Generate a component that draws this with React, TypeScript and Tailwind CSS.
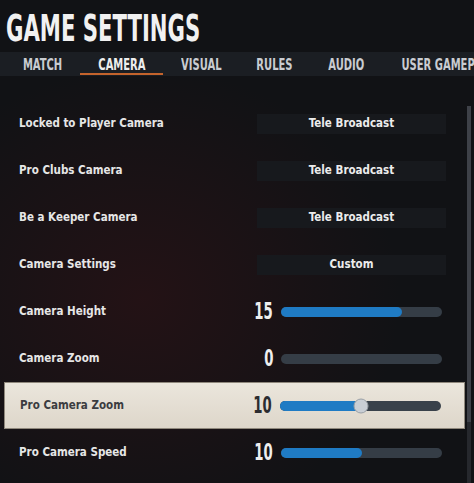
import React from 'react';

type Row =
  | { label: string; kind: 'select'; value: string }
  | { label: string; kind: 'slider'; value: number; active?: boolean; thumb?: boolean };

const tabs = [
  { name: 'MATCH', w: 'w-[74px]' },
  { name: 'CAMERA', w: 'w-[83px]' },
  { name: 'VISUAL', w: 'w-[76px]' },
  { name: 'RULES', w: 'w-[70px]' },
  { name: 'AUDIO', w: 'w-[74px]' },
  { name: 'USER GAMEPLAY', w: 'w-[130px]' },
];

const rows: Row[] = [
  { label: 'Locked to Player Camera', kind: 'select', value: 'Tele Broadcast' },
  { label: 'Pro Clubs Camera', kind: 'select', value: 'Tele Broadcast' },
  { label: 'Be a Keeper Camera', kind: 'select', value: 'Tele Broadcast' },
  { label: 'Camera Settings', kind: 'select', value: 'Custom' },
  { label: 'Camera Height', kind: 'slider', value: 15 },
  { label: 'Camera Zoom', kind: 'slider', value: 0 },
  { label: 'Pro Camera Zoom', kind: 'slider', value: 10, active: true, thumb: true },
  { label: 'Pro Camera Speed', kind: 'slider', value: 10 },
];

const Slider: React.FC<{ value: number; active?: boolean; thumb?: boolean }> = ({ value, active, thumb }) => {
  const pct = (value / 20) * 100;
  return (
    <div className={`relative shrink-0 w-[161px] h-[10px] rounded-full ${active ? 'bg-[#39414a]' : 'bg-[#353d46]'}`}>
      <div className="absolute left-0 top-0 h-full rounded-full bg-[#1f7bc4]" style={{ width: `${pct}%` }} />
      {thumb && (
        <div
          className="absolute top-1/2 w-[15px] h-[15px] -translate-x-1/2 -translate-y-1/2 rounded-full bg-[#c9ced4] border border-[#9aa0a6]"
          style={{ left: `${pct}%` }}
        />
      )}
    </div>
  );
};

const App: React.FC = () => {
  return (
    <div className="relative w-[474px] h-[483px] overflow-hidden bg-[#111215] bg-[radial-gradient(ellipse_at_30%_62%,rgba(70,18,22,0.35),transparent_55%)] font-['DejaVu_Sans_Condensed','DejaVu_Sans',sans-serif]">
      <div className="h-[52px] pl-[6px] pt-[7px]">
        <h1 className="inline-block origin-left scale-x-[0.62] text-[38px] leading-[42px] font-bold text-[#f1f1f1] whitespace-nowrap">
          GAME SETTINGS
        </h1>
      </div>

      <div className="flex h-[24px] pl-[6px] pt-[2px] bg-[#1b1e23] whitespace-nowrap">
        {tabs.map((tab) => (
          <div
            key={tab.name}
            className={`relative shrink-0 flex items-center justify-center ${tab.w} text-[15px] font-bold ${tab.name === 'CAMERA' ? 'text-[#eeeeee]' : 'text-[#c9ccd1]'}`}
          >
            <span className="inline-block scale-x-[0.74]">{tab.name}</span>
            {tab.name === 'CAMERA' && <div className="absolute left-0 right-0 bottom-[1px] h-[2px] bg-[#c4632c]" />}
          </div>
        ))}
      </div>

      <div className="pt-[24px]">
        {rows.map((row) => {
          const active = row.kind === 'slider' && row.active;
          return (
            <div
              key={row.label}
              className={`flex items-center h-[47px] mx-[4px] w-[461px] ${active ? 'bg-[linear-gradient(180deg,#ebe6dc,#ddd6ca)] border border-[#8f887c]' : ''}`}
            >
              <div className={`flex-1 pl-[15px] text-[11.5px] font-bold ${active ? 'text-[#3b3c40]' : 'text-[#e6e6e6]'}`}>
                {row.label}
              </div>
              {row.kind === 'select' ? (
                <div className="shrink-0 w-[189px] h-[20px] mr-[19px] flex items-center justify-center bg-[#17191d] text-[11.5px] font-bold text-[#ececec]">
                  {row.value}
                </div>
              ) : (
                <div className="shrink-0 w-[189px] mr-[19px] flex items-center">
                  <div className="shrink-0 w-[16px] flex justify-end">
                    <span
                      className={`inline-block origin-right scale-x-[0.64] text-[23px] leading-none font-semibold ${active ? 'text-[#2b2c30]' : 'text-[#eeeeee]'}`}
                    >
                      {row.value}
                    </span>
                  </div>
                  <div className="ml-[8px]">
                    <Slider value={row.value} active={active} thumb={row.thumb} />
                  </div>
                </div>
              )}
            </div>
          );
        })}
      </div>

      <div className="absolute right-[3px] top-[106px] w-[4px] h-[316px] bg-[#3e4148]" />
      <div className="absolute right-[3px] top-[422px] w-[4px] h-[61px] bg-[#26282d]" />
    </div>
  );
};

export default App;
